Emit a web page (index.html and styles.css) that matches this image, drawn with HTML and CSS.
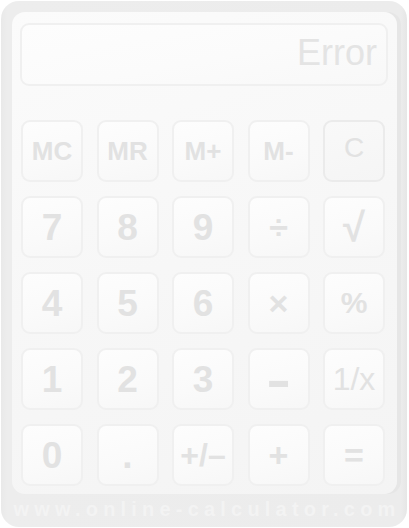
FILE: index.html
```html
<!DOCTYPE html>
<html>
<head>
<meta charset="utf-8">
<link rel="stylesheet" href="styles.css">
</head>
<body>
<div class="calc">
  <div class="panel">
    <div class="display"><span class="display-text">Error</span></div>
    <div class="keys">
      <div class="key mem">MC</div>
      <div class="key mem">MR</div>
      <div class="key mem">M+</div>
      <div class="key mem">M-</div>
      <div class="key clear">C</div>
      <div class="key">7</div>
      <div class="key">8</div>
      <div class="key">9</div>
      <div class="key op">÷</div>
      <div class="key sqrt">√</div>
      <div class="key">4</div>
      <div class="key">5</div>
      <div class="key">6</div>
      <div class="key op">×</div>
      <div class="key pct">%</div>
      <div class="key">1</div>
      <div class="key">2</div>
      <div class="key">3</div>
      <div class="key op"><span class="minus">–</span></div>
      <div class="key inv">1/x</div>
      <div class="key">0</div>
      <div class="key">.</div>
      <div class="key sign">+/–</div>
      <div class="key op">+</div>
      <div class="key op">=</div>
    </div>
  </div>
  <div class="footer">www.online-calculator.com</div>
</div>
</body>
</html>
```

FILE: styles.css
```css
html, body {
  margin: 0;
  padding: 0;
  background: #ffffff;
}

.calc {
  margin: 1px 0 0 1px;
  width: 406px;
  height: 526px;
  box-sizing: border-box;
  background: linear-gradient(to right, #e9e9e9 0px, #ededed 6px, #ececec 400px, #e6e6e6 406px);
  border-radius: 18px;
  padding: 11px 10px 0 11px;
  display: flex;
  flex-direction: column;
  font-family: "Liberation Sans", Arial, sans-serif;
}

.panel {
  height: 482px;
  box-sizing: border-box;
  background: linear-gradient(160deg, #fbfbfb 0%, #f7f7f7 50%, #f4f4f4 100%);
  border-radius: 13px;
  padding: 11px 9px 8px 8px;
  display: flex;
  flex-direction: column;
  gap: 34px;
  box-shadow: 4px 0 0 #e6e6e6;
}

.display {
  height: 63px;
  box-sizing: border-box;
  border: 2px solid #f0f0f0;
  border-radius: 9px;
  background: linear-gradient(170deg, #fdfdfd 0%, #fbfbfb 55%, #f8f8f8 100%);
  display: flex;
  align-items: center;
  justify-content: flex-end;
  padding: 0 9px 4px 0;
}

.display-text {
  font-size: 36px;
  color: #e4e4e4;
}

.keys {
  display: grid;
  grid-template-columns: repeat(5, 62px);
  grid-auto-rows: 62px;
  column-gap: 13.5px;
  row-gap: 14px;
  padding-left: 1px;
}

.key {
  box-sizing: border-box;
  border: 2px solid #f0f0f0;
  border-radius: 9px;
  background: linear-gradient(165deg, #fdfdfd 0%, #fafafa 60%, #f7f7f7 100%);
  display: flex;
  align-items: center;
  justify-content: center;
  color: #e2e2e2;
  font-weight: bold;
  font-size: 37px;
  line-height: 1;
}

.mem {
  font-size: 26px;
}

.clear {
  border-color: #ebebeb;
  background: linear-gradient(165deg, #f9f9f9 0%, #f5f5f5 100%);
  font-weight: normal;
  font-size: 28px;
  padding-bottom: 6px;
}

.op {
  font-size: 34px;
}

.minus {
  display: inline-block;
  font-size: 38px;
  transform: scaleY(1.6);
}

.sqrt {
  font-size: 40px;
  font-weight: bold;
}

.pct {
  font-size: 30px;
}

.inv {
  font-size: 32px;
  font-weight: normal;
}

.sign {
  font-size: 32px;
}

.footer {
  flex: 1;
  display: flex;
  align-items: center;
  justify-content: center;
  white-space: nowrap;
  font-size: 20px;
  font-weight: bold;
  letter-spacing: 5.2px;
  color: #f3f3f3;
  padding: 0 0 2px 5px;
}
```
